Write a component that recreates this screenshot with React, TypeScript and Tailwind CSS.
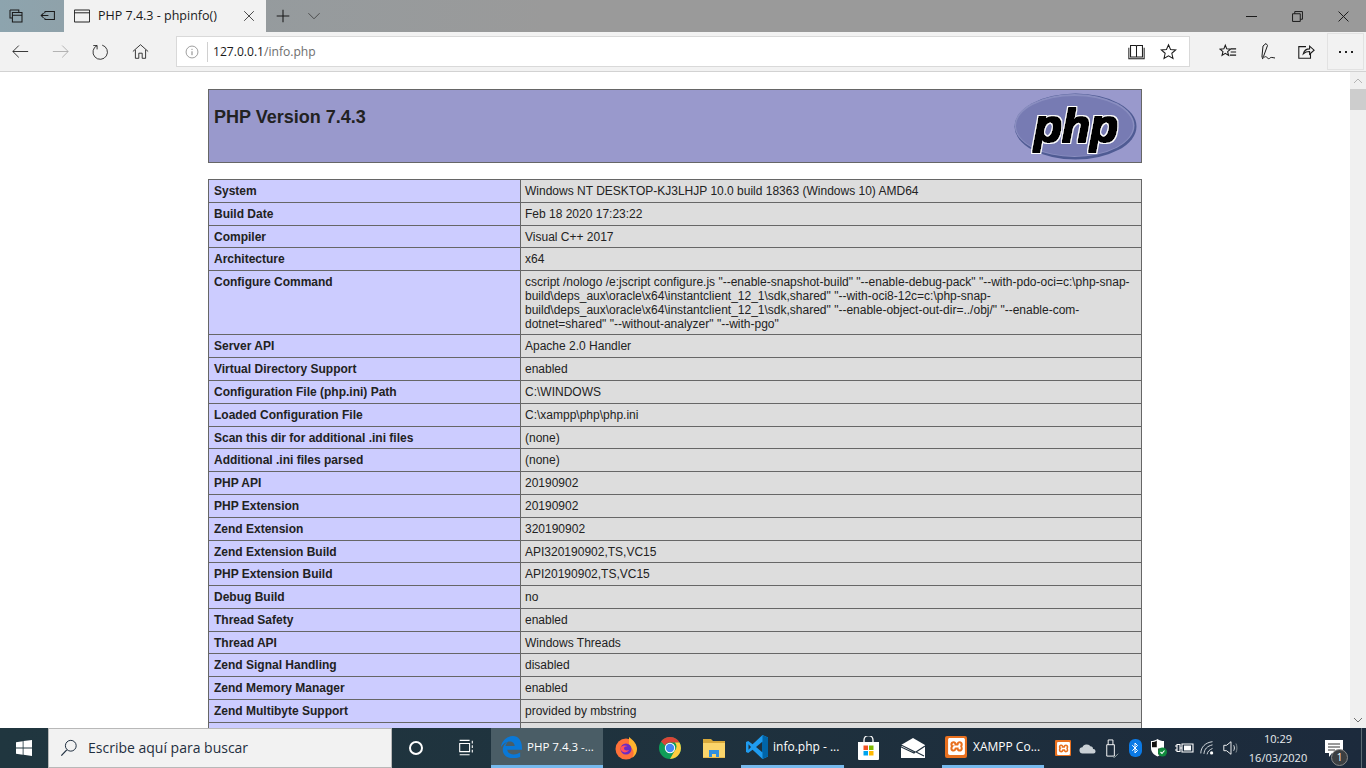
import React from "react";
import { SiXampp } from "react-icons/si";
import { Bluetooth } from "lucide-react";

const rows: [string, string, number?][] = [
  ["System", "Windows NT DESKTOP-KJ3LHJP 10.0 build 18363 (Windows 10) AMD64"],
  ["Build Date", "Feb 18 2020 17:23:22"],
  ["Compiler", "Visual C++ 2017"],
  ["Architecture", "x64"],
  ["Configure Command", 'cscript /nologo /e:jscript configure.js "--enable-snapshot-build" "--enable-debug-pack" "--with-pdo-oci=c:\\php-snap-build\\deps_aux\\oracle\\x64\\instantclient_12_1\\sdk,shared" "--with-oci8-12c=c:\\php-snap-build\\deps_aux\\oracle\\x64\\instantclient_12_1\\sdk,shared" "--enable-object-out-dir=../obj/" "--enable-com-dotnet=shared" "--without-analyzer" "--with-pgo"', 64],
  ["Server API", "Apache 2.0 Handler"],
  ["Virtual Directory Support", "enabled"],
  ["Configuration File (php.ini) Path", "C:\\WINDOWS"],
  ["Loaded Configuration File", "C:\\xampp\\php\\php.ini"],
  ["Scan this dir for additional .ini files", "(none)"],
  ["Additional .ini files parsed", "(none)"],
  ["PHP API", "20190902"],
  ["PHP Extension", "20190902"],
  ["Zend Extension", "320190902"],
  ["Zend Extension Build", "API320190902,TS,VC15"],
  ["PHP Extension Build", "API20190902,TS,VC15"],
  ["Debug Build", "no"],
  ["Thread Safety", "enabled"],
  ["Thread API", "Windows Threads"],
  ["Zend Signal Handling", "disabled"],
  ["Zend Memory Manager", "enabled"],
  ["Zend Multibyte Support", "provided by mbstring"],
  ["", ""],
];

const S = ({ size = 20, children, className = "" }: { size?: number; children: React.ReactNode; className?: string }) => (
  <svg width={size} height={size} viewBox="0 0 20 20" fill="none" stroke="currentColor" strokeWidth="1" className={className}>
    {children}
  </svg>
);

function ToolBtn({ children, w = "w-10" }: { children: React.ReactNode; w?: string }) {
  return <div className={`${w} h-full flex items-center justify-center shrink-0 text-[#1a1a1a]`}>{children}</div>;
}

function PhpLogo() {
  return (
    <svg width="123" height="67" viewBox="0 0 123 67">
      <defs>
        <filter id="phpglyph" x="-10%" y="-10%" width="120%" height="120%">
          <feMorphology in="SourceAlpha" operator="dilate" radius="1.7" result="outer" />
          <feFlood floodColor="#ffffff" />
          <feComposite in2="outer" operator="in" result="white" />
          <feMorphology in="SourceAlpha" operator="dilate" radius="0.5" result="inner" />
          <feFlood floodColor="#000000" />
          <feComposite in2="inner" operator="in" result="black" />
          <feMerge>
            <feMergeNode in="white" />
            <feMergeNode in="black" />
          </feMerge>
        </filter>
      </defs>
      <ellipse cx="61.500" cy="33.500" rx="61" ry="33" fill="#4f5b93" />
      <ellipse cx="60.500" cy="32.500" rx="60" ry="31.500" fill="#8a8ec0" />
      <ellipse cx="60.500" cy="33" rx="58.500" ry="30" fill="#777bb3" />
      <text x="20" y="49" filter="url(#phpglyph)" fontFamily="'Liberation Sans', sans-serif" fontWeight="700" fontStyle="italic" fontSize="47" textLength="84" lengthAdjust="spacingAndGlyphs" fill="#000">php</text>
    </svg>
  );
}

function TrayIcon({ children, w = "w-6" }: { children: React.ReactNode; w?: string }) {
  return <div className={`${w} h-10 flex items-center justify-center shrink-0 text-white`}>{children}</div>;
}

export default function App() {
  return (
    <div className="w-[1366px] h-[768px] flex flex-col overflow-hidden bg-white font-['Open_Sans',sans-serif]">
      {/* Tab strip */}
      <div className="h-8 shrink-0 flex items-stretch bg-[linear-gradient(90deg,#8da4ae_0%,#959b9e_18%,#9a9a9a_40%,#9a9a9a_100%)] text-[#1a1a1a]">
        <div className="w-[32px] flex items-center justify-center">
          <S size={16}><path d="M2.500 2.500h11v3M2.500 2.500v10h3M5.500 5.500h12v12h-12zM5.500 9h12" strokeWidth="1.300" /></S>
        </div>
        <div className="w-[32px] flex items-center justify-center">
          <S size={16}><path d="M6 4.500h12v10H6M6 4.500v2M6 12.500v2M1.500 9.500h9M4.500 6.500l-3 3 3 3" strokeWidth="1.300" /></S>
        </div>
        <div className="w-[202px] bg-[#f2f2f2] flex items-center">
          <S size={16} className="ml-[10px]"><path d="M0.500 2.500h19v15h-19zM0.500 6h19" strokeWidth="1.200" /></S>
          <span className="ml-[8px] text-[12.500px] leading-none whitespace-nowrap">PHP 7.4.3 - phpinfo()</span>
          <S size={12} className="ml-auto mr-[11px] text-[#444]"><path d="M2 2l16 16M18 2L2 18" strokeWidth="1.600" /></S>
        </div>
        <div className="w-[34px] flex items-center justify-center">
          <S size={14}><path d="M10 1v18M1 10h18" strokeWidth="1.500" /></S>
        </div>
        <div className="w-[28px] flex items-center justify-center text-[#444]">
          <S size={14}><path d="M2 6l8 8 8-8" strokeWidth="1.300" /></S>
        </div>
        <div className="ml-auto flex">
          <div className="w-[46px] flex items-center justify-center"><S size={11}><path d="M0 10h20" strokeWidth="1.800" /></S></div>
          <div className="w-[46px] flex items-center justify-center"><S size={11}><path d="M1 5h14v14H1zM5 5V1h14v14h-4" strokeWidth="1.800" /></S></div>
          <div className="w-[46px] flex items-center justify-center"><S size={11}><path d="M1 1l18 18M19 1L1 19" strokeWidth="1.800" /></S></div>
        </div>
      </div>

      {/* Toolbar */}
      <div className="h-10 shrink-0 bg-[#f2f2f2] border-b border-[#d2d2d2] flex items-stretch">
        <ToolBtn><S size={17}><path d="M1 10h18M8 3l-7 7 7 7" /></S></ToolBtn>
        <ToolBtn><S size={17} className="text-[#a8a8a8]"><path d="M1 10h18M12 3l7 7-7 7" /></S></ToolBtn>
        <ToolBtn><S size={17}><path d="M6 2.500A8.500 8.500 0 1 0 12 2M6 7V2.500H1.500" transform="translate(0 .5)" /></S></ToolBtn>
        <ToolBtn><S size={17}><path d="M1 10l9-8 9 8M4 8v10h4v-6h4v6h4V8" /></S></ToolBtn>
        <div className="ml-4 my-1 w-[1014px] bg-white border border-[#d9d9d9] flex items-center">
          <S size={14} className="ml-[8px] text-[#777]"><circle cx="10" cy="10" r="8.500" /><path d="M10 9v5.500M10 5.500v1.500" strokeWidth="1.300" /></S>
          <div className="ml-[8px] w-px h-[20px] bg-[#d0d0d0]" />
          <span className="ml-[5px] mt-[2px] text-[12.100px] leading-none text-[#1a1a1a] whitespace-nowrap">127.0.0.1<span className="text-[#6e6e6e]">/info.php</span></span>
          <div className="ml-auto flex items-center text-[#1a1a1a]">
            <S size={17} className="mr-[15px]"><path d="M3 4h6c.6 0 1 .4 1 1v12.500H3zM10 5c0-.6.4-1 1-1h6v13.500h-7M1 6.500v13h18v-13" transform="translate(0 -1)" strokeWidth="1.200" /></S>
            <S size={17} className="mr-[12px]"><path d="M10 2l2.400 5.600 6.100.5-4.600 4 1.400 6L10 15l-5.300 3.100 1.400-6-4.600-4 6.100-.5z" strokeWidth="1.200" /></S>
          </div>
        </div>
        <div className="ml-[18px] flex">
          <ToolBtn w="w-[39px]"><S size={18}><path d="M7 2.500l1.600 4 4.200.3-3.200 2.800 1 4.200L7 11.500l-3.600 2.300 1-4.200L1.200 6.800l4.200-.3zM13 6.500h6M13 10h6M12 13.500h7" strokeWidth="1.200" /></S></ToolBtn>
          <ToolBtn w="w-[39px]"><S size={20}><path d="M5 14l1-10 3-2.500 1.500 2-4 11-1.500 1zM5 17c3-2.500 3.500-3 5-1.500s2 1.500 3 .5 2-.5 5 0" /></S></ToolBtn>
          <ToolBtn w="w-[39px]"><S size={18}><path d="M10 4H2v13h13v-5M7 12c1-4 4-5.500 7-5.500V3.500l5 4.500-5 4.500V9.500c-3 0-5 .5-7 2.500z" strokeWidth="1.200" /></S></ToolBtn>
        </div>
        <div className="ml-[2px] my-[1px] w-[37px] border border-[#e2e2e2] flex items-center justify-center gap-[4px]">
          <i className="w-[2px] h-[2px] bg-[#222]" /><i className="w-[2px] h-[2px] bg-[#222]" /><i className="w-[2px] h-[2px] bg-[#222]" />
        </div>
      </div>

      {/* Page */}
      <div className="flex-1 min-h-0 flex">
        <div className="flex-1 min-w-0 overflow-hidden pt-[17px] pl-[208px] font-['Liberation_Sans',sans-serif] text-[#222] text-[12px] leading-[14px]">
          <div className="w-[934px] h-[74px] border border-[#666] bg-[#9999cc] flex justify-between pl-[5px] pr-[4px] pt-[3px]">
            <h1 className="mt-[14px] text-[18px] leading-[21px] font-bold">PHP Version 7.4.3</h1>
            <PhpLogo />
          </div>
          <div className="w-[934px] mt-[16.050px] border-x border-t border-[#666]">
            {rows.map(([k, v, h], i) => (
              <div key={i} className="flex border-b border-[#666] h-[22.800px] data-[tall=true]:h-[64.100px]" data-tall={h ? "true" : "false"}>
                <div className="w-[312px] shrink-0 bg-[#ccccff] border-r border-[#666] pl-[5px] pt-[4px] font-bold">{k}</div>
                <div className="flex-1 bg-[#dddddd] pl-[4px] pr-[8px] pt-[4px] [overflow-wrap:anywhere]">{v}</div>
              </div>
            ))}
          </div>
        </div>
        <div className="w-4 shrink-0 bg-[#f0f0f0] flex flex-col">
          <div className="h-[17px] flex items-center justify-center text-[#a6a6a6]"><S size={10}><path d="M2 14l8-8 8 8" strokeWidth="1.600" /></S></div>
          <div className="h-[21px] bg-[#cdcdcd]" />
          <div className="mt-auto h-[17px] flex items-center justify-center text-[#505050]"><S size={10}><path d="M2 6l8 8 8-8" strokeWidth="1.600" /></S></div>
        </div>
      </div>

      {/* Taskbar */}
      <div className="h-10 shrink-0 bg-[linear-gradient(90deg,#20363f_0%,#1f333e_40%,#1c2a3c_100%)] flex items-stretch text-white font-['Open_Sans',sans-serif]">
        <div className="w-12 shrink-0 flex items-center justify-center">
          <svg width="16" height="16" viewBox="0 0 16 16" fill="#fff"><path d="M0 2.300l6.700-1V7.600H0zM7.500 1.100L16 0v7.600H7.500zM0 8.400h6.700v6.400L0 13.800zM7.500 8.400H16V16l-8.500-1.200z" /></svg>
        </div>
        <div className="w-[344px] shrink-0 bg-[#f2f2f2] border border-[#b8b8b8] flex items-center text-[#1f2f40]">
          <S size={18} className="ml-[11px]"><circle cx="12" cy="7.500" r="6" strokeWidth="1.100" /><path d="M7.500 12L1.500 18.500" strokeWidth="1.300" /></S>
          <span className="ml-[10px] text-[14px] leading-none whitespace-nowrap">Escribe aquí para buscar</span>
        </div>
        <div className="w-12 shrink-0 flex items-center justify-center">
          <div className="w-[14px] h-[14px] rounded-full border-[2.500px] border-white" />
        </div>
        <div className="w-[51px] shrink-0 flex items-center justify-center">
          <S size={18}><path d="M3 1.500h11M3 17.500h11M3 5h11v9H3zM17 2v3M17 7v3M17 12v3" strokeWidth="1.200" /></S>
        </div>
        <div className="w-[112px] shrink-0 bg-[#4a5d66] border-b-[3px] border-[#76b9ed] flex items-center">
          <svg width="22" height="22" viewBox="0 0 24 24" className="ml-[9px] mt-[1px]">
            <path d="M1 12C2 4 9 0 14 0c6 0 10 5 10 13v2H8c0 5 8 7 14 3v5c-8 3-19 1-19-8 0-5 4-8 6-9-2 2-3 4-3 5h10c0-5-6-7-11-3-2 1.500-3 3-4 4z" fill="#0a78d7" />
          </svg>
          <span className="ml-[5px] text-[11.500px] leading-none whitespace-nowrap">PHP 7.4.3 -...</span>
        </div>
        <div className="w-[45px] shrink-0 flex items-center justify-center">
          <svg width="24" height="24" viewBox="0 0 24 24">
            <circle cx="12" cy="13" r="10.500" fill="#ff7139" />
            <path d="M15 1c4 3 8 7 8 12 0 4-2 7-5 9 3-4 2-9-3-12z" fill="#ffb52e" />
            <circle cx="12" cy="13" r="5.500" fill="#6a2bc4" />
            <path d="M7 11c2-2 5-2 7-.5-2-.5-4 .5-4 2 0 2 3 2.500 5 1.500-1 2-4 3-6 2-2-1-3-3-2-5z" fill="#ff4f5e" />
          </svg>
        </div>
        <div className="w-[44px] shrink-0 flex items-center justify-center">
          <svg width="24" height="24" viewBox="0 0 24 24">
            <circle cx="12" cy="12" r="11" fill="#0f9d58" />
            <path d="M12 1a11 11 0 0 1 9.500 5.500H12a5.500 5.500 0 0 0-5 3L3 5.500A11 11 0 0 1 12 1z" fill="#db4437" />
            <path d="M21.500 6.500A11 11 0 0 1 12 23l4.800-8.500a5.500 5.500 0 0 0 0-8z" fill="#ffcd40" />
            <circle cx="12" cy="12" r="5.200" fill="#fff" />
            <circle cx="12" cy="12" r="4.200" fill="#4285f4" />
          </svg>
        </div>
        <div className="w-[44px] shrink-0 flex items-center justify-center">
          <svg width="22" height="20" viewBox="0 0 22 20">
            <path d="M0 1h8l2 2h12v3H0z" fill="#d9a93a" />
            <path d="M0 5h22v15H0z" fill="#fbd56b" />
            <path d="M6 12h10v8h-3v-4H9v4H6z" fill="#2f8fe0" />
            <path d="M0 19h22v1H0z" fill="#e8b94d" />
          </svg>
        </div>
        <div className="w-[103px] shrink-0 ml-[5px] border-b-[3px] border-[#76b9ed] flex items-center">
          <svg width="24" height="24" viewBox="0 0 24 24" className="ml-[4px]">
            <path d="M17.500 0L7.600 9.300 3.200 6 1 7v10l2.200 1 4.400-3.300 9.900 9.300 5.500-2.400V2.400zM17 7v10l-6-5zM3.500 9.300L6 12l-2.500 2.700z" fill="#1f9cf0" fillRule="evenodd" />
            <path d="M17.500 0L23 2.400v19.200L17.500 24zM17 7v10l.5.4V6.600z" fill="#0065a9" />
          </svg>
          <span className="ml-[4px] text-[12px] leading-none whitespace-nowrap">info.php - ...</span>
        </div>
        <div className="w-[44px] shrink-0 ml-[2px] flex items-center justify-center">
          <svg width="23" height="24" viewBox="0 0 23 24">
            <path d="M7 6V4a4.500 4.500 0 0 1 9 0v2" stroke="#fff" strokeWidth="1.300" fill="none" />
            <path d="M1 6h21v17a1 1 0 0 1-1 1H2a1 1 0 0 1-1-1z" fill="#fff" />
            <path d="M6.500 9.500h4.500V14H6.500z" fill="#f25022" />
            <path d="M12 9.500h4.500V14H12z" fill="#7fba00" />
            <path d="M6.500 15h4.500v4.500H6.500z" fill="#00a4ef" />
            <path d="M12 15h4.500v4.500H12z" fill="#ffb900" />
          </svg>
        </div>
        <div className="w-[44px] shrink-0 ml-[1px] flex items-center justify-center">
          <svg width="24" height="20" viewBox="0 0 24 20">
            <path d="M0 7L12 0l12 7v13H0z" fill="#fff" />
            <path d="M0 7l14 7-1 1-13-6zM24 8L15 14l8 4" fill="none" stroke="#20303e" strokeWidth="1.100" />
          </svg>
        </div>
        <div className="w-[102px] shrink-0 ml-[7px] border-b-[3px] border-[#76b9ed] flex items-center">
          <div className="ml-[3px] w-[22px] h-[22px] rounded-[2px] bg-[#e8701f] flex items-center justify-center">
            <SiXampp size={17} className="text-white" />
          </div>
          <span className="ml-[6px] text-[12px] leading-none whitespace-nowrap">XAMPP Co...</span>
        </div>
        <div className="ml-[7px] flex shrink-0">
          <TrayIcon>
            <div className="w-[16px] h-[16px] rounded-[1px] bg-[#e8701f] flex items-center justify-center"><SiXampp size={13} className="text-white" /></div>
          </TrayIcon>
          <TrayIcon>
            <svg width="17" height="11" viewBox="0 0 18 12" fill="#c9d0d5"><path d="M4 11.500a3.500 3.500 0 0 1-.5-7A5 5 0 0 1 12 3.500a3 3 0 0 1 3 3 2.500 2.500 0 0 1 .5 5z" /></svg>
          </TrayIcon>
          <TrayIcon>
            <S size={19}><path d="M5 6h8v12H5zM6.500 6V1h5v5M8 3h.01M10 3h.01" /><path d="M11 18l2 1.500 4-4" stroke="#9aa" /></S>
          </TrayIcon>
          <TrayIcon>
            <div className="w-[13px] h-[18px] rounded-[6px] bg-[#0b7ae6] flex items-center justify-center"><Bluetooth size={12} strokeWidth={2} /></div>
          </TrayIcon>
          <TrayIcon>
            <svg width="18" height="18" viewBox="0 0 18 18">
              <path d="M7.500 0c2 1.500 4 2 6.500 2v7c0 4-3 7-6.500 8.500C4 16 1 13 1 9V2c2.500 0 4.500-.5 6.500-2z" fill="#fff" />
              <path d="M6.800 1.500V8.200H2V3c2 0 3.500-.5 4.800-1.500z" fill="#111" />
              <path d="M8.200 9.500v6.300c2-1 3.500-3 4.300-6.300z" fill="#111" />
              <circle cx="12.500" cy="13" r="4.500" fill="#0f8a3c" />
              <path d="M10.500 13l1.500 1.500 2.500-3" stroke="#fff" strokeWidth="1.100" fill="none" />
            </svg>
          </TrayIcon>
          <TrayIcon w="w-[25px]">
            <S size={20}><path d="M1 8h2M1 12h2M3 6.500h3v7H3zM6 10h2M8 6h11v8H8z" strokeWidth="1.100" /><path d="M10 7.500h7v5h-7z" fill="currentColor" stroke="none" /></S>
          </TrayIcon>
          <TrayIcon w="w-[23px]">
            <S size={18}><path d="M2 16c0-7 5-12 13-13M5.500 16.500C6 11 9 8 15 6.500M9 17c.5-3 2.500-5 6-6.500" stroke="#d5dade" strokeWidth="1.100" /><circle cx="14" cy="15.500" r="1.800" fill="#fff" stroke="none" /></S>
          </TrayIcon>
          <TrayIcon>
            <S size={18}><path d="M2 7h3l5-4v14l-5-4H2zM13 7c1 2 1 4 0 6" /><path d="M15.500 5c1.500 3 1.500 7 0 10" stroke="#8a949a" /></S>
          </TrayIcon>
        </div>
        <div className="w-[62px] shrink-0 ml-[4px] flex flex-col items-center justify-center text-[11px] leading-[19px] text-[#e8ecef] whitespace-nowrap">
          <span>10:29</span>
          <span>16/03/2020</span>
        </div>
        <div className="relative w-[38px] shrink-0 ml-[7px]">
          <svg width="18" height="18" viewBox="0 0 18 18" className="absolute left-[9px] top-[12px]">
            <path d="M0 0h18v13H7l-3 4v-4H0z" fill="#fff" />
            <path d="M3 4h12M3 7h12M3 10h7" stroke="#333" strokeWidth="1" />
          </svg>
          <span className="absolute left-[15px] top-[21px] w-[17px] h-[17px] rounded-full bg-[#3c3f42] border border-[#8a8a8a] text-[10px] leading-[15px] text-center text-white">1</span>
        </div>
        <div className="ml-[7px] w-[5px] shrink-0 border-l border-[#5c6b74]" />
      </div>
    </div>
  );
}
